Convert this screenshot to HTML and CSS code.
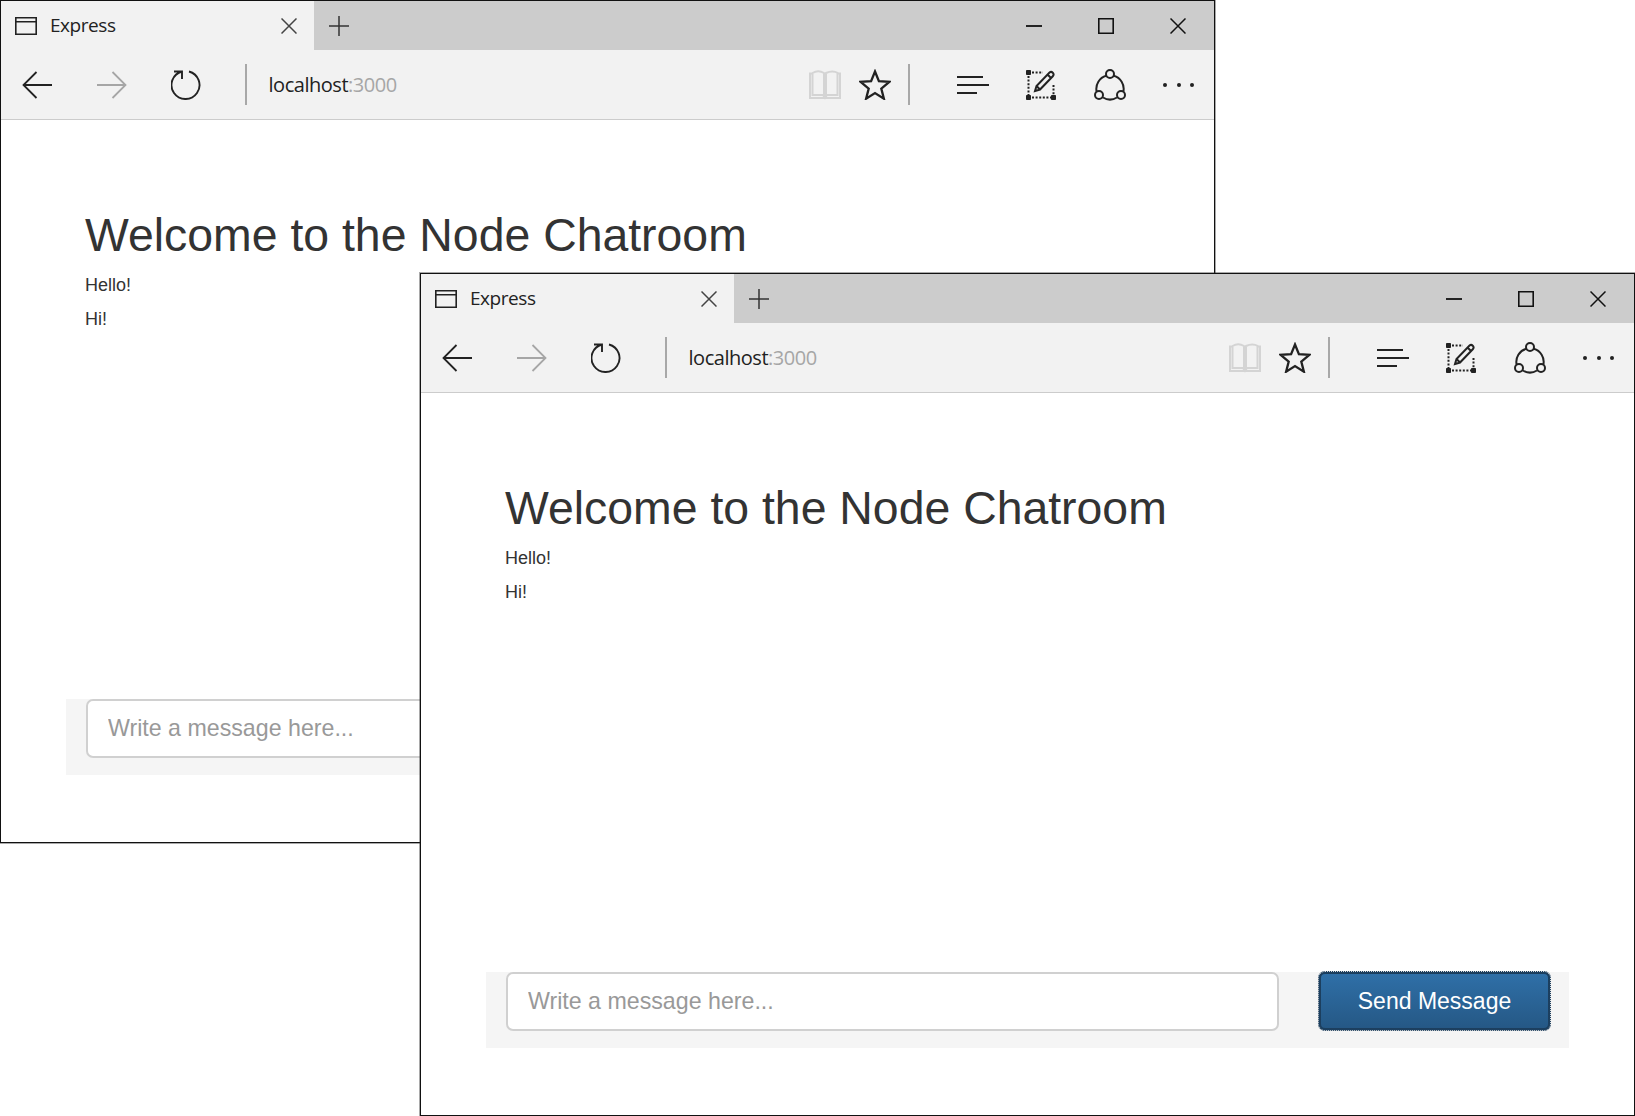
FILE: index.html
```html
<!DOCTYPE html>
<html lang="en">
<head>
<meta charset="utf-8">
<title>Express</title>
<link rel="stylesheet" href="styles.css">
</head>
<body>
<svg class="defs" width="0" height="0" aria-hidden="true">
  <defs>
    <symbol id="i-page" viewBox="0 0 22 18"><path d="M.75.75h20.5v16.5H.75zM.75 4.750h20.5" fill="none" stroke="currentColor" stroke-width="1.700"/></symbol>
    <symbol id="i-x" viewBox="0 0 16 16"><path d="M.5.5l15 15M15.500.5l-15 15" fill="none" stroke="currentColor" stroke-width="1.500"/></symbol>
    <symbol id="i-plus" viewBox="0 0 20 20"><path d="M10 0v20M0 10h20" fill="none" stroke="currentColor" stroke-width="1.500"/></symbol>
    <symbol id="i-min" viewBox="0 0 16 16"><path d="M0 8h16" fill="none" stroke="currentColor" stroke-width="1.800"/></symbol>
    <symbol id="i-max" viewBox="0 0 16 16"><path d="M.75.75h14.500v14.500H.75z" fill="none" stroke="currentColor" stroke-width="1.700"/></symbol>
    <symbol id="i-back" viewBox="0 0 30 28"><path d="M30 14H1.500M14.500 1L1.500 14l13 13" fill="none" stroke="currentColor" stroke-width="1.800"/></symbol>
    <symbol id="i-forward" viewBox="0 0 30 28"><path d="M0 14h28.500M15.500 1l13 13-13 13" fill="none" stroke="currentColor" stroke-width="1.800"/></symbol>
    <symbol id="i-refresh" viewBox="0 0 30 30"><path d="M18 1.500A14 14 0 1 1 11 1.500M3 1.500h8v7.500" fill="none" stroke="currentColor" stroke-width="1.900"/></symbol>
    <symbol id="i-book" viewBox="0 0 32 30"><path d="M1 3.500h2.500V25H14l2 3 2-3h10.500V3.500H31V28H1zM3.500 3C7 1 11.500 1 15 3v23M29 3c-3.500-2-8-2-12 0v23M17 3.500V26" fill="none" stroke="currentColor" stroke-width="2"/></symbol>
    <symbol id="i-star" viewBox="0 0 32 31"><path d="M16 2.500l3.900 9.700 10.400.7-8 6.700 2.600 10.100-8.900-5.600-8.900 5.600 2.600-10.100-8-6.700 10.400-.7z" fill="none" stroke="currentColor" stroke-width="2.300"/></symbol>
    <symbol id="i-hub" viewBox="0 0 32 18"><path d="M0 1h26M0 9h32M0 17h20" fill="none" stroke="currentColor" stroke-width="1.900"/></symbol>
    <symbol id="i-note" viewBox="0 0 30 30"><path d="M2.500 6v19M27.500 15v10M6 27.500h19M6 2.500h11" fill="none" stroke="currentColor" stroke-width="2" stroke-dasharray="2 1.600"/><path d="M.5.500h4v4h-4zM.5 25.500h4v4h-4zM25.500 25.500h4v4h-4z" fill="currentColor" stroke="currentColor"/><path d="M9 21l1.500-5L23.500 2.500a2.500 2.500 0 0 1 3.500 3.500L14 19.500zM10.500 16l3.500 3.500M21.500 4.500L25 8" fill="none" stroke="currentColor" stroke-width="2"/></symbol>
    <symbol id="i-share" viewBox="0 0 32 32"><g fill="none" stroke="currentColor" stroke-width="2"><circle cx="16" cy="5" r="4"/><circle cx="5" cy="26" r="4"/><circle cx="27" cy="26" r="4"/><path d="M12.300 6.800A13.500 13.500 0 0 0 2.600 22.500M19.700 6.800A13.500 13.500 0 0 1 29.400 22.500M9 28.500a13.500 13.500 0 0 0 14 0"/></g></symbol>
  </defs>
</svg>

<section class="window window-back">
  <header class="tabstrip">
    <div class="tab">
      <svg class="icon-page"><use href="#i-page"/></svg>
      <span class="tab-title">Express</span>
      <svg class="icon-tabclose"><use href="#i-x"/></svg>
    </div>
    <div class="newtab"><svg class="icon-plus"><use href="#i-plus"/></svg></div>
    <div class="controls">
      <div class="control"><svg class="icon-ctl"><use href="#i-min"/></svg></div>
      <div class="control"><svg class="icon-ctl"><use href="#i-max"/></svg></div>
      <div class="control"><svg class="icon-ctl"><use href="#i-x"/></svg></div>
    </div>
  </header>
  <nav class="toolbar">
    <div class="nav-btn"><svg class="icon-arrow"><use href="#i-back"/></svg></div>
    <div class="nav-btn disabled"><svg class="icon-arrow"><use href="#i-forward"/></svg></div>
    <div class="nav-btn"><svg class="icon-refresh"><use href="#i-refresh"/></svg></div>
    <div class="sep sep-left"></div>
    <div class="address">localhost<span class="port">:3000</span></div>
    <svg class="icon-book"><use href="#i-book"/></svg>
    <svg class="icon-star"><use href="#i-star"/></svg>
    <div class="sep sep-right"></div>
    <div class="tool-btn"><svg class="icon-hub"><use href="#i-hub"/></svg></div>
    <div class="tool-btn"><svg class="icon-note"><use href="#i-note"/></svg></div>
    <div class="tool-btn"><svg class="icon-share"><use href="#i-share"/></svg></div>
    <div class="tool-btn"><div class="dots"><i></i><i></i><i></i></div></div>
  </nav>
  <main class="page">
    <h1 class="title">Welcome to the Node Chatroom</h1>
    <p class="msg">Hello!</p>
    <p class="msg">Hi!</p>
    <form class="chat-form">
      <input class="chat-input" type="text" placeholder="Write a message here...">
      <button class="send" type="button">Send Message</button>
    </form>
  </main>
</section>

<section class="window window-front">
  <header class="tabstrip">
    <div class="tab">
      <svg class="icon-page"><use href="#i-page"/></svg>
      <span class="tab-title">Express</span>
      <svg class="icon-tabclose"><use href="#i-x"/></svg>
    </div>
    <div class="newtab"><svg class="icon-plus"><use href="#i-plus"/></svg></div>
    <div class="controls">
      <div class="control"><svg class="icon-ctl"><use href="#i-min"/></svg></div>
      <div class="control"><svg class="icon-ctl"><use href="#i-max"/></svg></div>
      <div class="control"><svg class="icon-ctl"><use href="#i-x"/></svg></div>
    </div>
  </header>
  <nav class="toolbar">
    <div class="nav-btn"><svg class="icon-arrow"><use href="#i-back"/></svg></div>
    <div class="nav-btn disabled"><svg class="icon-arrow"><use href="#i-forward"/></svg></div>
    <div class="nav-btn"><svg class="icon-refresh"><use href="#i-refresh"/></svg></div>
    <div class="sep sep-left"></div>
    <div class="address">localhost<span class="port">:3000</span></div>
    <svg class="icon-book"><use href="#i-book"/></svg>
    <svg class="icon-star"><use href="#i-star"/></svg>
    <div class="sep sep-right"></div>
    <div class="tool-btn"><svg class="icon-hub"><use href="#i-hub"/></svg></div>
    <div class="tool-btn"><svg class="icon-note"><use href="#i-note"/></svg></div>
    <div class="tool-btn"><svg class="icon-share"><use href="#i-share"/></svg></div>
    <div class="tool-btn"><div class="dots"><i></i><i></i><i></i></div></div>
  </nav>
  <main class="page">
    <h1 class="title">Welcome to the Node Chatroom</h1>
    <p class="msg">Hello!</p>
    <p class="msg">Hi!</p>
    <form class="chat-form">
      <input class="chat-input" type="text" placeholder="Write a message here...">
      <button class="send focused" type="button">Send Message</button>
    </form>
  </main>
</section>
</body>
</html>
```

FILE: styles.css
```css
* { box-sizing: border-box; }
html, body { margin: 0; padding: 0; background: #fff; }
body { position: relative; width: 1635px; height: 1116px; overflow: hidden; }
.defs { position: absolute; }

.window {
  position: absolute;
  width: 1215px;
  height: 843px;
  display: flex;
  flex-direction: column;
  background: #fff;
  border: 1px solid #111;
  box-shadow: 0 0 0 1px rgba(40, 40, 40, .4);
}
.window-back { left: 0; top: 0; }
.window-front { left: 420px; top: 273px; }

svg { display: block; flex: none; color: #222; }

.tabstrip { display: flex; height: 49px; flex: none; background: #ccc; }
.tab {
  width: 313px;
  display: flex;
  align-items: center;
  background: #f2f2f2;
  padding-left: 14px;
}
.icon-page { width: 22px; height: 18px; }
.tab-title {
  margin-left: 13px;
  font: 19px/1 "Open Sans", "Noto Sans", sans-serif;
  color: #222;
  letter-spacing: -.45px;
}
.icon-tabclose { width: 16px; height: 16px; margin-left: auto; margin-right: 17px; color: #444; }
.newtab { width: 49px; display: flex; align-items: center; justify-content: center; }
.icon-plus { width: 20px; height: 20px; color: #333; }
.controls { display: flex; margin-left: auto; }
.control { width: 72px; display: flex; align-items: center; justify-content: center; }
.icon-ctl { width: 16px; height: 16px; color: #111; }

.toolbar {
  height: 70px;
  flex: none;
  display: flex;
  align-items: center;
  background: #f2f2f2;
  border-bottom: 1px solid #ccc;
}
.nav-btn { width: 74.5px; display: flex; justify-content: center; }
.nav-btn:first-child { margin-left: -1.5px; }
.nav-btn.disabled { padding-left: 2px; }
.nav-btn.disabled svg { color: #a6a6a6; }
.icon-arrow { width: 30px; height: 28px; }
.icon-refresh { width: 30px; height: 30px; }
.sep { width: 2px; height: 41px; background: #a8a8a8; flex: none; }
.sep-left { margin-left: 21.5px; }
.address {
  margin-left: 22px;
  width: 540px;
  font: 20px/1 "Open Sans", "Noto Sans", sans-serif;
  letter-spacing: -.47px;
  color: #222;
}
.port { color: #a6a6a6; }
.icon-book { width: 32px; height: 30px; color: #d4d4d4; }
.icon-star { width: 32px; height: 31px; margin-left: 18px; }
.sep-right { margin-left: 17.500px; margin-right: 29px; }
.tool-btn { width: 68.500px; display: flex; justify-content: center; }
.icon-hub { width: 32px; height: 18px; }
.icon-note { width: 30px; height: 30px; margin-left: -2px; }
.icon-share { width: 32px; height: 32px; }
.dots { display: flex; gap: 9.500px; }
.dots i { width: 4px; height: 4px; border-radius: 50%; background: #222; }

.page {
  flex: 1;
  display: flex;
  flex-direction: column;
  padding: 88px 65px 0;
  font-family: "Liberation Sans", Arial, sans-serif;
}
.title {
  margin: 0 0 13px 19px;
  font: 400 46.400px/54px "Liberation Sans", Arial, sans-serif;
  color: #333;
}
.msg {
  margin: 0 0 14px 19px;
  font-size: 18px;
  line-height: 20px;
  color: #333;
}
.chat-form {
  margin-top: 356px;
  height: 76px;
  width: 1083px;
  display: flex;
  align-items: flex-start;
  background: #f5f5f5;
  padding-left: 20px;
}
.chat-input {
  width: 773px;
  height: 59px;
  padding: 0 20px;
  border: 2px solid #d0d0d0;
  border-radius: 7px;
  background: #fff;
  font: 23.200px "Liberation Sans", Arial, sans-serif;
  color: #333;
}
.chat-input::placeholder { color: #999; opacity: 1; }
.send {
  width: 233px;
  height: 60px;
  margin-left: 39px;
  margin-top: -1px;
  border: 3px solid #1c3f5f;
  border-radius: 7px;
  background: linear-gradient(#2f6fa7 0, #2e6da4 10%, #255885 100%);
  color: #fff;
  font: 23px "Liberation Sans", Arial, sans-serif;
}
.send.focused { outline: 1px dotted #ddd; outline-offset: -1px; }
```
